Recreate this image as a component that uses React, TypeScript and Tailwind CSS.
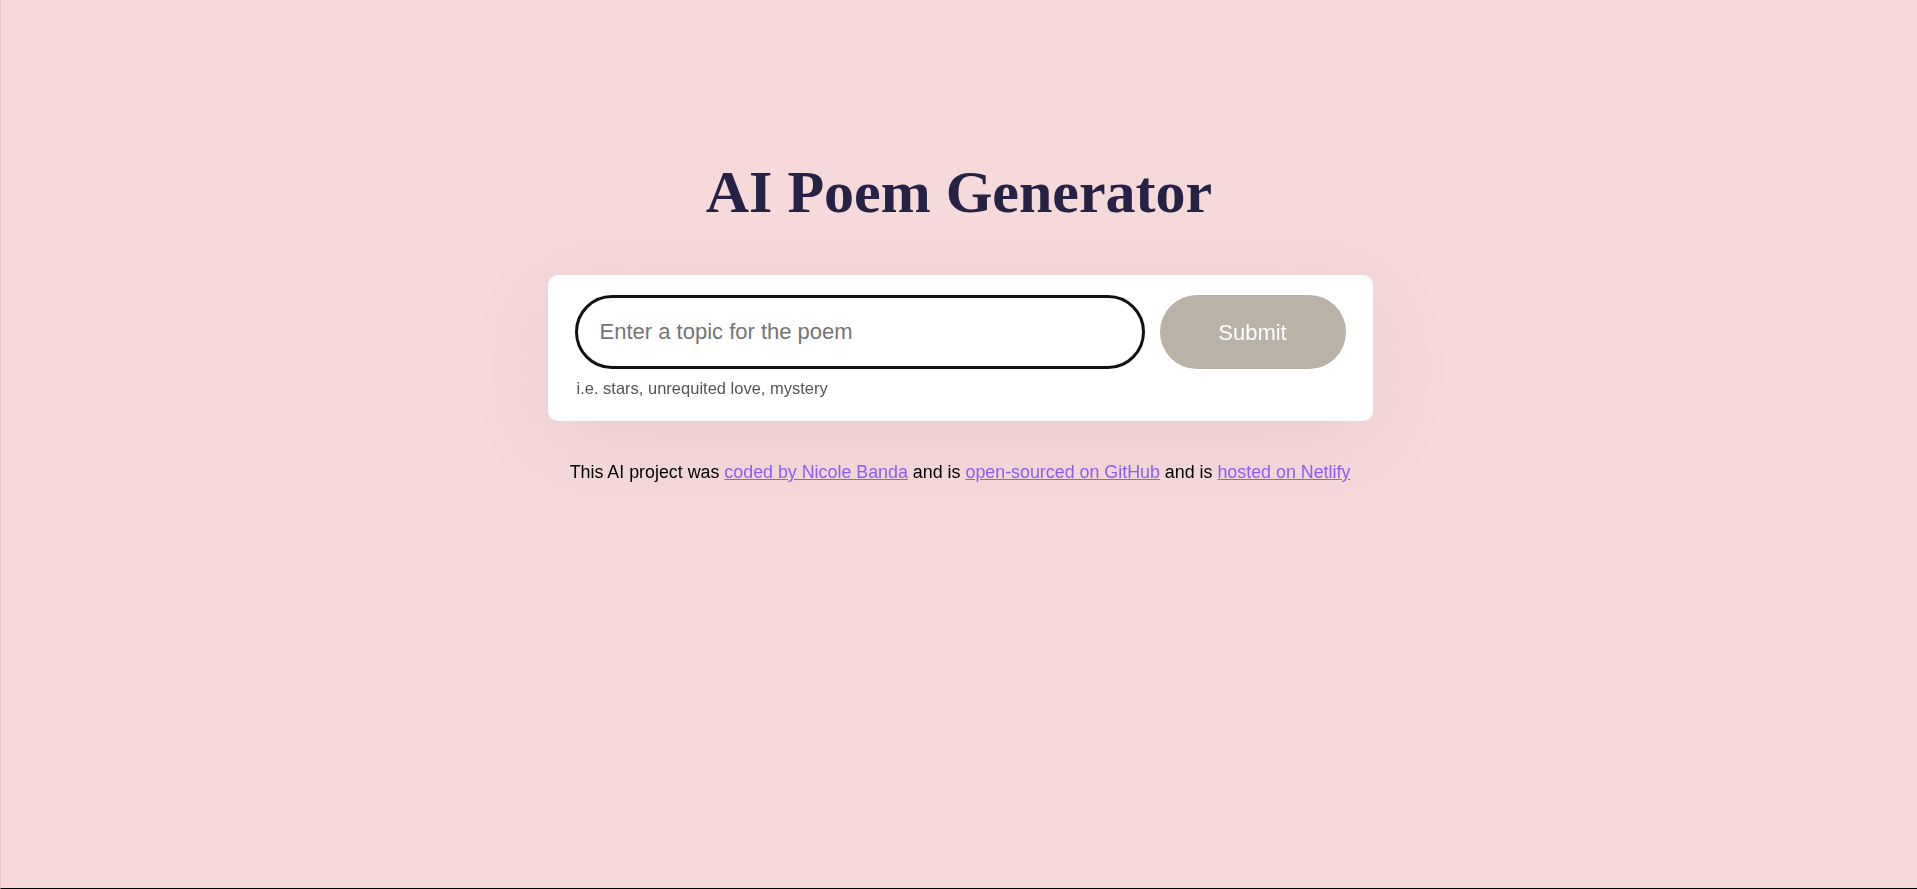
import { useState } from "react";

const sans = { fontFamily: '"Liberation Sans", Arial, sans-serif' };

export default function App() {
  const [topic, setTopic] = useState("");

  return (
    <div
      className="flex h-[889px] flex-col items-center border-b border-l border-b-black border-l-[#e3c6c8] bg-[#f5d9db] pt-[162px]"
      style={sans}
    >
      <h1
        className="text-[60px] font-bold leading-none text-[#272146]"
        style={{ fontFamily: '"Liberation Serif", "Times New Roman", serif' }}
      >
        AI Poem Generator
      </h1>

      <form
        className="mt-[53px] ml-[2px] w-[825px] rounded-[10px] bg-white px-[27px] pt-5 pb-6 shadow-[0_20px_90px_rgba(120,60,70,0.08)]"
        onSubmit={(e) => e.preventDefault()}
      >
        <div className="flex gap-[15px]">
          <input
            autoFocus
            value={topic}
            onChange={(e) => setTopic(e.target.value)}
            placeholder="Enter a topic for the poem"
            className="h-[74px] flex-1 rounded-full border-[3px] border-[#111] px-[22px] text-[22px] text-[#222] caret-[#272146] outline-none placeholder:text-[#757575]"
          />
          <button
            type="submit"
            className="h-[74px] w-[186px] rounded-full bg-[#b9b2a6] text-[22px] text-white"
          >
            Submit
          </button>
        </div>
        <div className="mt-[10px] pl-[2px] text-[16.5px] leading-[18px] text-[#555]">
          i.e. stars, unrequited love, mystery
        </div>
      </form>

      <footer className="mt-[37px] ml-[2px] text-[17.85px] leading-7 text-black">
        This AI project was{" "}
        <a href="#" className="text-[#8b5cf6] underline">
          coded by Nicole Banda
        </a>{" "}
        and is{" "}
        <a href="#" className="text-[#8b5cf6] underline">
          open-sourced on GitHub
        </a>{" "}
        and is{" "}
        <a href="#" className="text-[#8b5cf6] underline">
          hosted on Netlify
        </a>
      </footer>
    </div>
  );
}
